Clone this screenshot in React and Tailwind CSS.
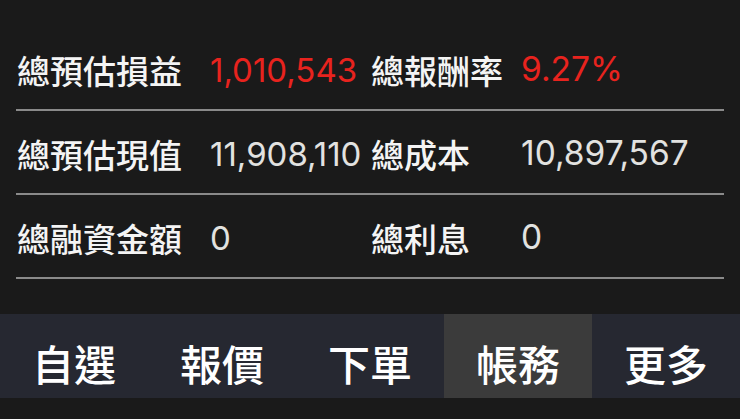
import React from "react";

const rows = [
  { l1: "總預估損益", v1: "1,010,543", l2: "總報酬率", v2: "9.27%", red: true },
  { l1: "總預估現值", v1: "11,908,110", l2: "總成本", v2: "10,897,567" },
  { l1: "總融資金額", v1: "0", l2: "總利息", v2: "0" },
];

const tabs = ["自選", "報價", "下單", "帳務", "更多"];

const cjk = "font-['Noto_Sans_CJK_TC','Noto_Sans',sans-serif]";
const num = "font-['Inter','Liberation_Sans',sans-serif]";

export default function App() {
  return (
    <div className="w-[740px] h-[419px] bg-[#1a1a1a] flex flex-col overflow-hidden">
      {/* summary rows */}
      <div className="pt-[27px] px-[16px]">
        {rows.map((r, i) => (
          <div
            key={i}
            className="h-[84px] flex items-center pt-[4px] border-b-2 border-[#8a8a8a]"
          >
            <div className={`w-[194px] pl-[1px] text-[33px] leading-none font-medium text-[#f4f4f4] ${cjk}`}>{r.l1}</div>
            <div
              className={`w-[161px] text-[33px] leading-none ${num} ${r.red ? "text-[#e8231e]" : "text-[#e2e2e0]"}`}
            >
              {r.v1}
            </div>
            <div className={`w-[150px] text-[33px] leading-none font-medium text-[#f4f4f4] ${cjk}`}>{r.l2}</div>
            <div
              className={`text-[33.5px] leading-none ${num} ${r.red ? "text-[#e8231e]" : "text-[#e2e2e0]"}`}
            >
              {r.v2}
            </div>
          </div>
        ))}
      </div>

      {/* bottom tab bar */}
      <div className="mt-[35px] h-[84px] bg-[#262831] grid grid-cols-5">
        {tabs.map((t, i) => (
          <div
            key={t}
            className={`flex items-center justify-center pt-[12px] text-[42px] font-medium text-white ${cjk} ${
              i === 3 ? "bg-[#3b3b3b]" : ""
            }`}
          >
            {t}
          </div>
        ))}
      </div>
    </div>
  );
}
